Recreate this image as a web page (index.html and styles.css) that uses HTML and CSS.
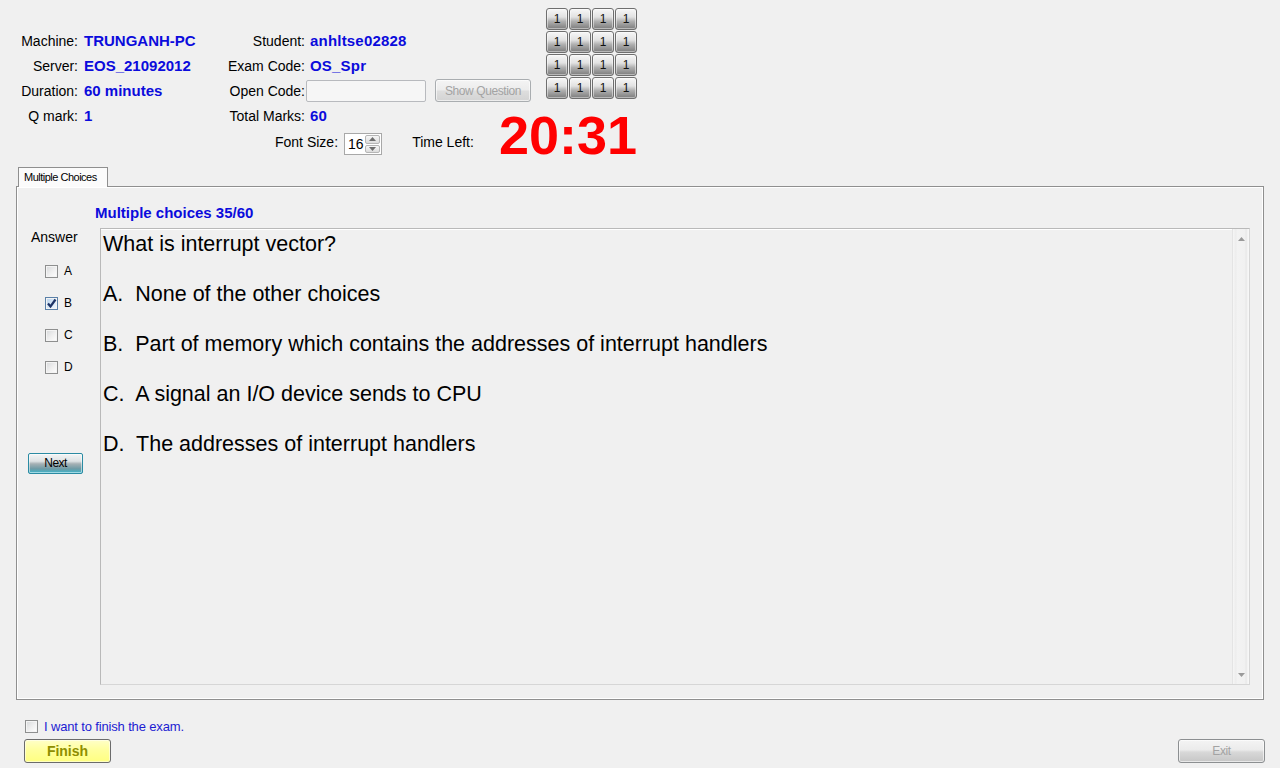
FILE: index.html
```html
<!DOCTYPE html>
<html>
<head>
<meta charset="utf-8">
<title>Exam</title>
<link rel="stylesheet" href="styles.css">
</head>
<body>
<div class="app">
  <header class="head">
    <div class="info">
      <span class="lbl">Machine:</span><span class="val">TRUNGANH-PC</span>
      <span class="lbl">Student:</span><span class="val v2">anhltse02828</span>
      <span class="lbl">Server:</span><span class="val">EOS_21092012</span>
      <span class="lbl">Exam Code:</span><span class="val v2">OS_Spr</span>
      <span class="lbl">Duration:</span><span class="val">60 minutes</span>
      <span class="lbl">Open Code:</span>
      <span class="codecell"><span class="codebox"></span><button class="btn-show" disabled>Show Question</button></span>
      <span class="lbl">Q mark:</span><span class="val">1</span>
      <span class="lbl">Total Marks:</span><span class="val v2">60</span>
    </div>
    <div class="qgrid">
      <button class="qb">1</button><button class="qb">1</button><button class="qb">1</button><button class="qb">1</button>
      <button class="qb">1</button><button class="qb">1</button><button class="qb">1</button><button class="qb">1</button>
      <button class="qb">1</button><button class="qb">1</button><button class="qb">1</button><button class="qb">1</button>
      <button class="qb">1</button><button class="qb">1</button><button class="qb">1</button><button class="qb">1</button>
    </div>
    <div class="fontrow">
      <span class="flbl">Font Size:</span>
      <span class="spin">
        <span class="num">16</span>
        <span class="arrows">
          <span class="arr"><svg width="7" height="4" viewBox="0 0 7 4"><path d="M0 4 L3.5 0 L7 4Z" fill="#6d6d6d"/></svg></span>
          <span class="arr"><svg width="7" height="4" viewBox="0 0 7 4"><path d="M0 0 L3.5 4 L7 0Z" fill="#6d6d6d"/></svg></span>
        </span>
      </span>
      <span class="flbl tl">Time Left:</span>
      <span class="timer">20:31</span>
    </div>
  </header>

  <div class="tabs"><div class="tab">Multiple Choices</div></div>
  <section class="panel">
    <div class="qhead">Multiple choices 35/60</div>
    <div class="qbody">
      <div class="answers">
        <div class="anslbl">Answer</div>
        <div class="opt"><span class="cb"></span><span class="ol">A</span></div>
        <div class="opt"><span class="cb on"><svg width="11" height="11" viewBox="0 0 11 11"><path d="M2 5.5 L4.5 8.5 L9.5 1.5" stroke="#1d3366" stroke-width="2.2" fill="none"/></svg></span><span class="ol">B</span></div>
        <div class="opt"><span class="cb"></span><span class="ol">C</span></div>
        <div class="opt"><span class="cb"></span><span class="ol">D</span></div>
        <button class="btn-next">Next</button>
      </div>
      <div class="qbox">
        <div class="qtext">
          <p>What is interrupt vector?</p>
          <p>A.&nbsp; None of the other choices</p>
          <p>B.&nbsp; Part of memory which contains the addresses of interrupt handlers</p>
          <p>C.&nbsp; A signal an I/O device sends to CPU</p>
          <p>D.&nbsp; The addresses of interrupt handlers</p>
        </div>
        <div class="sbar">
          <svg width="7" height="4" viewBox="0 0 7 4"><path d="M0 4 L3.5 0 L7 4Z" fill="#9a9a9a"/></svg>
          <svg width="7" height="4" viewBox="0 0 7 4"><path d="M0 0 L3.5 4 L7 0Z" fill="#9a9a9a"/></svg>
        </div>
      </div>
    </div>
  </section>

  <footer class="foot">
    <div class="finishrow"><span class="cb"></span><span class="ftxt">I want to finish the exam.</span></div>
    <div class="btnrow">
      <button class="btn-finish">Finish</button>
      <button class="btn-exit" disabled>Exit</button>
    </div>
  </footer>
</div>
</body>
</html>
```

FILE: styles.css
```css
* { box-sizing: border-box; }
body {
  margin: 0;
  background: #f0f0f0;
  font-family: "Liberation Sans", Arial, sans-serif;
  color: #000;
}
button { font-family: inherit; padding: 0; margin: 0; cursor: default; }
.app { width: 1280px; height: 768px; overflow: hidden; }

/* header */
.head { display: grid; grid-template-columns: 546px 91px; }
.info {
  display: grid;
  grid-template-columns: 78px 146px 81px 230px;
  grid-auto-rows: 25px;
  align-items: center;
  margin-top: 28px;
  font-size: 14px;
  line-height: 16px;
}
.lbl { text-align: right; white-space: nowrap; }
.val {
  color: #0b0bdc;
  font-weight: bold;
  font-size: 15px;
  padding-left: 6px;
  white-space: nowrap;
}
.val.v2 { padding-left: 5px; letter-spacing: 0.2px; }
.codecell { display: flex; align-items: center; padding-left: 1px; }
.codebox {
  width: 120px; height: 22px;
  border: 1px solid #b8babe;
  border-radius: 2px;
  background: #f6f6f6;
}
.btn-show {
  width: 96px; height: 23px;
  margin-left: 9px;
  border: 1px solid #a9adb0;
  border-radius: 3px;
  background: linear-gradient(#f4f4f4 0%, #ececec 48%, #dedede 52%, #d3d3d3 100%);
  box-shadow: inset 0 0 0 1px rgba(255,255,255,0.6);
  color: #a3a3a3;
  font-size: 12px;
  letter-spacing: -0.4px;
}

.qgrid {
  display: grid;
  grid-template-columns: repeat(4, 22px);
  grid-auto-rows: 22px;
  gap: 1px;
  margin-top: 8px;
  align-self: start;
}
.qb {
  border: 1px solid #6f6f6f;
  border-radius: 3px;
  background: linear-gradient(#f7f7f7 0%, #e2e2e2 40%, #b0b0b0 62%, #7c7c7c 100%);
  box-shadow: inset 0 0 0 1px rgba(255,255,255,0.45);
  font-size: 12px;
  color: #111;
  line-height: 18px;
}

.fontrow {
  grid-column: 1 / -1;
  display: flex;
  align-items: flex-start;
  height: 28px;
  margin-top: 3px;
  padding-left: 275px;
  font-size: 14px;
  line-height: 16px;
}
.flbl { margin-top: 3px; white-space: nowrap; }
.flbl.tl { margin-left: 30px; }
.spin {
  display: flex;
  width: 39px; height: 22px;
  margin-left: 6px;
  margin-top: 2px;
  border: 1px solid #a8a8a8;
  background: #fff;
}
.spin .num { flex: 1; padding-left: 3px; line-height: 20px; font-size: 14px; }
.spin .arrows {
  width: 16px;
  display: flex;
  flex-direction: column;
  gap: 1px;
  padding: 1px 1px 1px 0;
}
.spin .arr {
  flex: 1;
  display: flex;
  align-items: center;
  justify-content: center;
  border: 1px solid #b5b5b5;
  border-radius: 2px;
  background: linear-gradient(#f6f6f6, #dcdcdc);
}
.timer {
  margin-left: 25px;
  margin-top: -18px;
  font-size: 54px;
  line-height: 44px;
  font-weight: bold;
  color: #ff0000;
}

/* tabs */
.tabs { margin: 8px 0 0 16px; display: flex; }
.tab {
  position: relative;
  z-index: 1;
  margin-left: 2px;
  margin-bottom: -1px;
  width: 90px;
  height: 20px;
  border: 1px solid #8f8f8f;
  border-bottom: none;
  background: #fbfbfb;
  padding-left: 5px;
  font-size: 11px;
  line-height: 18px;
  letter-spacing: -0.5px;
  white-space: nowrap;
}
.panel {
  margin: 0 16px;
  border: 1px solid #8f8f8f;
  box-shadow: inset 1px 1px 0 #fff, inset -1px -1px 0 #fff;
  padding: 18px 13px 14px 0;
}
.qhead {
  margin-left: 78px;
  margin-bottom: 7px;
  color: #0b0bdc;
  font-weight: bold;
  font-size: 15px;
  line-height: 16px;
}
.qbody { display: flex; }
.answers { width: 83px; flex: none; display: flex; flex-direction: column; }
.anslbl {
  margin-top: 1px;
  padding-left: 14px;
  font-size: 14px;
  line-height: 16px;
  margin-bottom: 18px;
}
.opt {
  display: flex;
  align-items: center;
  height: 16px;
  padding-left: 28px;
  margin-bottom: 16px;
}
.cb {
  width: 13px; height: 13px;
  flex: none;
  display: inline-flex;
  align-items: center;
  justify-content: center;
  border: 1px solid #8e8f8f;
  background: linear-gradient(135deg, #d6d8da 0%, #f0f0f0 55%, #ffffff 100%);
  box-shadow: inset 0 0 0 1px #f4f4f4;
}
.cb.on {
  background: linear-gradient(135deg, #b9d2ec 0%, #dcebf9 60%, #f2f8fe 100%);
  border-color: #5a80a8;
}
.ol { margin-left: 6px; font-size: 12px; line-height: 16px; }
.btn-next {
  width: 55px; height: 21px;
  margin: 62px 0 0 11px;
  border: 1px solid #2a8ba3;
  border-radius: 2px;
  background: linear-gradient(#f3f5f6 0%, #dde2e4 38%, #a5b0b4 52%, #6e9aa5 78%, #3cb6cc 100%);
  box-shadow: inset 0 0 0 1px rgba(255,255,255,0.5);
  font-size: 12px;
  letter-spacing: -0.6px;
  color: #000;
  line-height: 17px;
}
.qbox {
  flex: 1;
  height: 457px;
  display: flex;
  border: 1px solid #b9b9b9;
  border-right-color: #d6d6d6;
  border-bottom-color: #d6d6d6;
  box-shadow: inset 0 1px 0 #fff;
}
.qtext {
  flex: 1;
  padding: 3px 0 0 2px;
  font-size: 21.5px;
  line-height: 25px;
}
.qtext p { margin: 0 0 25px; white-space: nowrap; }
.sbar {
  width: 17px;
  display: flex;
  flex-direction: column;
  align-items: center;
  justify-content: space-between;
  padding: 8px 0 7px;
  border-left: 1px solid #e4e4e4;
  background: linear-gradient(90deg, #f6f6f6 0, #ececec 3px, #f3f3f3 4px, #f1f1f1 12px, #e7e7e7 13px, #f7f7f7 15px);
}

/* footer */
.finishrow {
  display: flex;
  align-items: center;
  margin-top: 18px;
  padding-left: 25px;
  height: 16px;
}
.ftxt {
  margin-left: 6px;
  color: #1c1cd2;
  font-size: 13px;
  letter-spacing: -0.15px;
  white-space: nowrap;
}
.btnrow {
  display: flex;
  justify-content: space-between;
  margin-top: 5px;
  padding: 0 15px 0 24px;
}
.btn-finish {
  width: 87px; height: 24px;
  border: 1px solid #6b6b6b;
  border-radius: 3px;
  background: linear-gradient(#ffffc8 0%, #ffff9e 45%, #ffff80 100%);
  box-shadow: inset 0 0 0 1px rgba(255,255,255,0.5);
  color: #8e8e00;
  font-weight: bold;
  font-size: 14px;
}
.btn-exit {
  width: 87px; height: 24px;
  border: 1px solid #8c8f91;
  border-radius: 3px;
  background: linear-gradient(#f4f4f4 0%, #ebebeb 45%, #d8d8d8 55%, #c6c6c6 100%);
  box-shadow: inset 0 0 0 1px rgba(255,255,255,0.6);
  color: #a3a3a3;
  font-size: 12px;
  letter-spacing: -0.4px;
}
```
